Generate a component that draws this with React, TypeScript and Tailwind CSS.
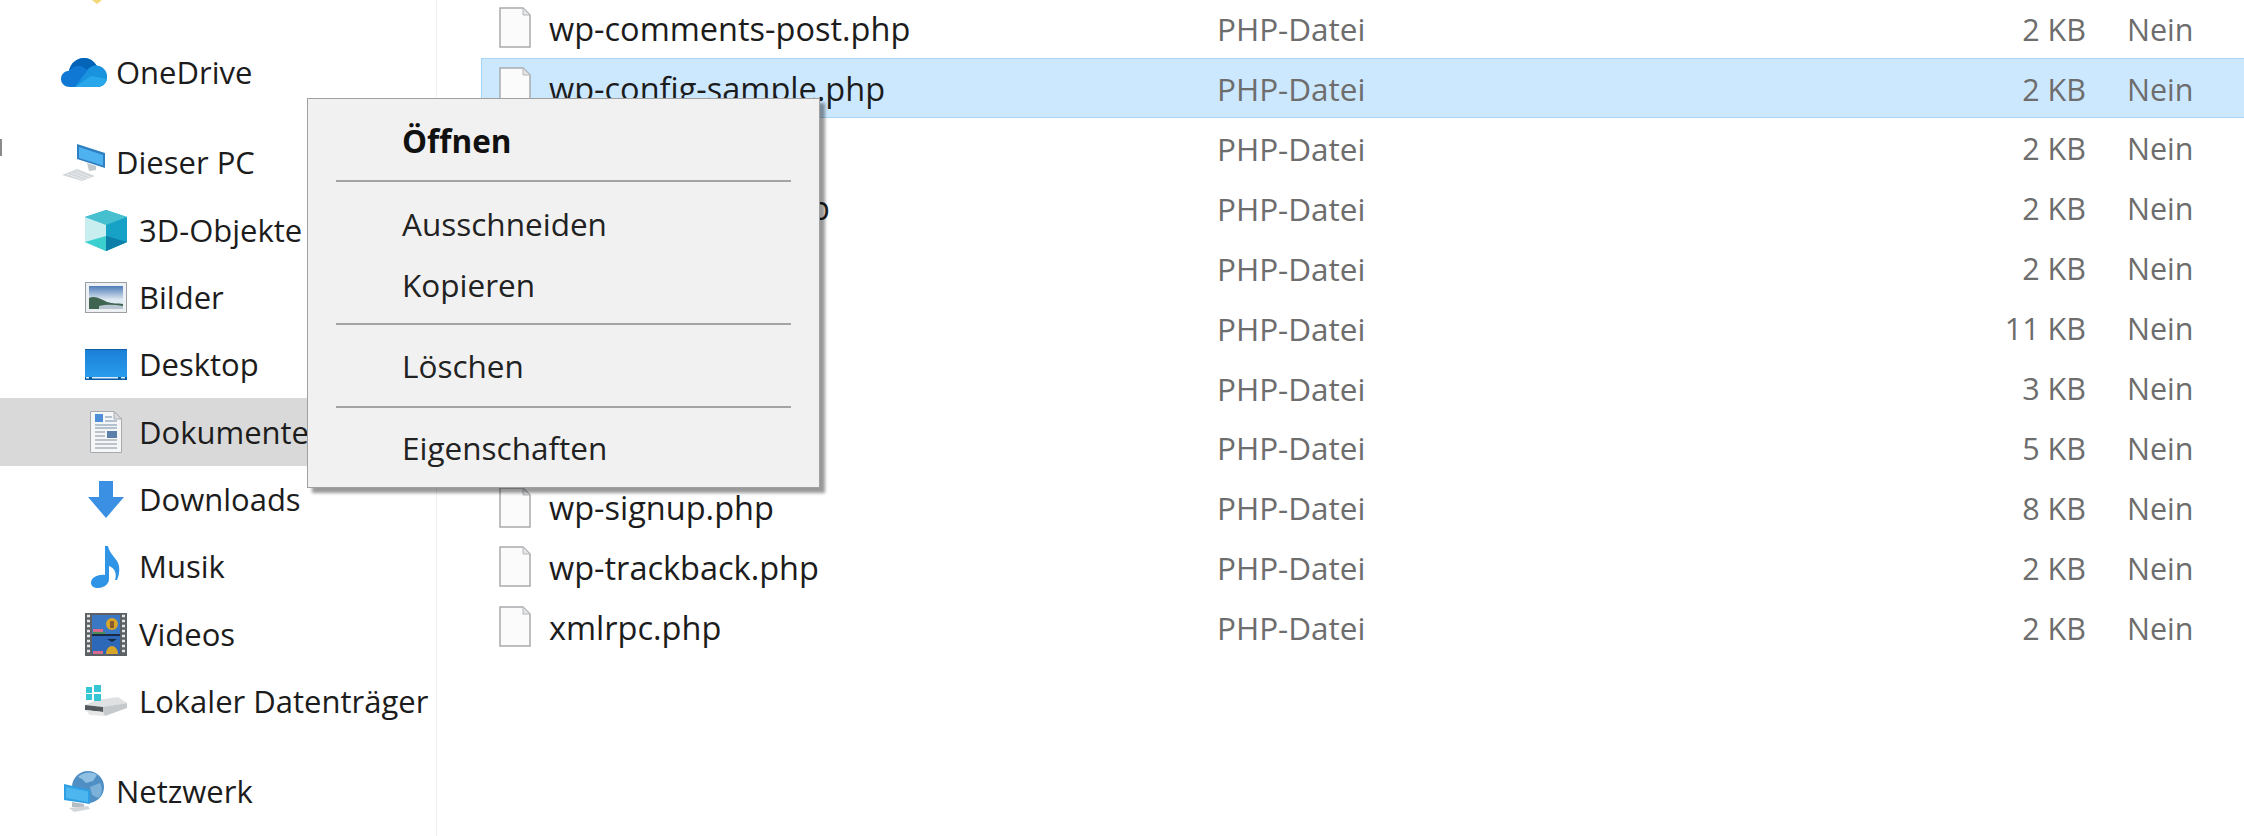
import React from 'react';

const files = [
  { name: 'wp-comments-post.php', size: '2 KB' },
  { name: 'wp-config-sample.php', size: '2 KB', selected: true },
  { name: 'wp-cron.php', size: '2 KB' },
  { name: 'wp-links-opml.php', size: '2 KB' },
  { name: 'wp-load.php', size: '2 KB' },
  { name: 'wp-login.php', size: '11 KB' },
  { name: 'wp-mail.php', size: '3 KB' },
  { name: 'wp-settings.php', size: '5 KB' },
  { name: 'wp-signup.php', size: '8 KB' },
  { name: 'wp-trackback.php', size: '2 KB' },
  { name: 'xmlrpc.php', size: '2 KB' },
];

const OneDriveIcon = () => (
  <svg width="46" height="30" viewBox="0 0 46 30">
    <path d="M9 29C4 29 0 25.500 0 21C0 16.500 3.500 13 8 12.800C9.500 5.500 15.500 0 23 0C28.500 0 33 3 35.500 7.500C41.500 8 46 13 46 19C46 25 41.500 29 36 29Z" fill="#0f78d4" />
    <path d="M8 12.800C9.500 5.500 15.500 0 23 0C28.500 0 33 3 35.500 7.500C31.500 7.500 28.500 9 26.500 12L21 8.500C16 7 11 9 8 12.800Z" fill="#0364b8" />
    <path d="M14 29L26.500 12C28.500 9 31.500 7.500 35.500 7.500C41.500 8 46 13 46 19C46 25 41.500 29 36 29Z" fill="#1a93df" />
    <path d="M14 29L30 18L46 21C45 26 41 29 36 29Z" fill="#28a8ea" />
  </svg>
);

const PcIcon = () => (
  <svg width="44" height="37" viewBox="0 0 44 37">
    <path d="M15 0L43 9V24L15 15Z" fill="#2f80c2" />
    <path d="M17 3L41 11V21.500L17 14Z" fill="#4fb2f0" />
    <path d="M25 19L34 22V26L27 27Z" fill="#c3cacf" />
    <path d="M0 31L15 25L33 32L20 37Z" fill="#d3d7da" />
    <path d="M5 30L22 36M9 28.500L26 35M13 27L29 33.500" stroke="#e9ebed" strokeWidth="1" />
  </svg>
);

const CubeIcon = () => (
  <svg width="42" height="41" viewBox="0 0 42 41">
    <path d="M21 0L42 7V32L21 41L0 32V7Z" fill="#1fb5c9" />
    <path d="M0 7L21 14V41L0 32Z" fill="#c8eef0" />
    <path d="M42 7L21 14V41L42 32Z" fill="#16a2c6" />
    <path d="M21 0L42 7L21 15L0 7Z" fill="#46bfcf" />
    <path d="M0 32L21 26V41Z" fill="#3ccfd0" />
    <path d="M42 32L21 26V41Z" fill="#0c7fa8" />
  </svg>
);

const PicturesIcon = () => (
  <svg width="42" height="31" viewBox="0 0 42 31">
    <defs>
      <linearGradient id="sky" x1="0" y1="0" x2="0" y2="1">
        <stop offset="0" stopColor="#4e7cb8" />
        <stop offset="0.6" stopColor="#dfe9f2" />
      </linearGradient>
    </defs>
    <rect x="0.500" y="0.500" width="41" height="30" fill="#eef1f4" stroke="#9c9fa3" />
    <rect x="4" y="4" width="34" height="23" fill="url(#sky)" />
    <path d="M4 16C10 13 16 17 22 20C28 22 33 21 38 22V27H4Z" fill="#3f6450" />
    <path d="M14 24C22 22 30 23 38 24V27H14Z" fill="#b9c6cf" />
  </svg>
);

const DesktopIcon = () => (
  <svg width="42" height="31" viewBox="0 0 42 31">
    <defs>
      <linearGradient id="screen" x1="0" y1="0" x2="0" y2="1">
        <stop offset="0" stopColor="#1a7fd6" />
        <stop offset="1" stopColor="#2a9ff0" />
      </linearGradient>
    </defs>
    <rect width="42" height="31" fill="url(#screen)" />
    <rect x="0" y="0" width="42" height="1" fill="#0e5fa8" />
    <rect x="0" y="28" width="42" height="3" fill="#0c5ba3" />
    <rect x="7" y="28" width="26" height="1.500" fill="#dbeefc" />
    <rect x="36" y="28" width="4" height="1.500" fill="#dbeefc" />
    <rect x="1" y="28" width="3" height="1.500" fill="#dbeefc" />
  </svg>
);

const DocumentsIcon = () => (
  <svg width="32" height="42" viewBox="0 0 32 42">
    <path d="M0.500 0.500H24L31.500 8V41.500H0.500Z" fill="#f5f6f7" stroke="#a8aaad" />
    <path d="M24 0.500V8H31.500Z" fill="#d9dce0" stroke="#a8aaad" />
    <rect x="5" y="3" width="8" height="8" fill="#4f8fd8" />
    <path d="M15 6H22M15 10H27M5 14H27M5 17H27" stroke="#9fb0c2" strokeWidth="1.500" />
    <path d="M5 21H15M5 25H15M5 29H27M5 33H27M5 37H27" stroke="#aab2bb" strokeWidth="1.500" />
    <rect x="17" y="20" width="10" height="7" fill="#5a7fa8" />
  </svg>
);

const DownloadsIcon = () => (
  <svg width="36" height="37" viewBox="0 0 36 37">
    <path d="M11 0H25V16H36L18 37L0 16H11Z" fill="#3b90e3" />
  </svg>
);

const MusicIcon = () => (
  <svg width="31" height="42" viewBox="0 0 31 42">
    <path d="M14 0H17C18 6 22 9 26 15C29 20 29 27 26 34H24C26 28 24 22 18 20V33C18 38 13 42 7 42C3 42 0 40 0 37C0 32 6 28 14 29Z" fill="#2f93e6" />
  </svg>
);

const VideosIcon = () => (
  <svg width="42" height="43" viewBox="0 0 42 43">
    <rect width="42" height="43" fill="#5d6166" />
    <rect x="7" y="2" width="28" height="19" fill="#3a78c4" />
    <rect x="7" y="23" width="28" height="18" fill="#2d68b8" />
    <rect x="7" y="21" width="28" height="2" fill="#1a2a44" />
    <circle cx="27" cy="11" r="6" fill="#d7a52a" />
    <path d="M25 8H29V15H25Z" fill="#8a5a2a" />
    <path d="M22 26H32L27 29Z" fill="#1a2a44" />
    <path d="M21 41C21 36 24 33 27 33C30 33 33 36 33 41Z" fill="#d7a52a" />
    <path d="M8 16H18V19H8Z" fill="#d86a8a" />
    <path d="M8 19H20V21H8Z" fill="#4d8a5a" />
    <path d="M8 38H18V41H8Z" fill="#d86a8a" />
    <path d="M2 3H5M2 8H5M2 13H5M2 18H5M2 23H5M2 28H5M2 33H5M2 38H5M37 3H40M37 8H40M37 13H40M37 18H40M37 23H40M37 28H40M37 33H40M37 38H40" stroke="#e4e6e8" strokeWidth="2.500" />
  </svg>
);

const DriveIcon = () => (
  <svg width="42" height="32" viewBox="0 0 42 32">
    <path d="M0 20L12 15L33 12L42 18L20 22L18 22Z" fill="#dfe1e3" />
    <path d="M0 20L18 22V27L0 25Z" fill="#55585c" />
    <path d="M0 25L18 27L20 31L5 30Z" fill="#e6e7e8" />
    <path d="M18 22L42 18V23L20 31L18 27Z" fill="#c6c9cc" />
    <rect x="1" y="2" width="6" height="6" fill="#35c6d6" />
    <rect x="9" y="0" width="7" height="7" fill="#35c6d6" />
    <rect x="1" y="9" width="6" height="6" fill="#35c6d6" />
    <rect x="9" y="9" width="7" height="7" fill="#35c6d6" />
  </svg>
);

const NetworkIcon = () => (
  <svg width="40" height="41" viewBox="0 0 40 41">
    <circle cx="24" cy="16" r="16" fill="#4f8fc4" />
    <path d="M14 6C19 1 28 0 33 4L29 10L22 12L18 8Z" fill="#8fbfe2" />
    <path d="M26 16L36 12C39 17 38 24 34 27L28 24Z" fill="#7cb2da" />
    <path d="M0 13L26 19V33L0 29Z" fill="#2f9fe4" />
    <path d="M2 16L24 20.500V31L2 27Z" fill="#4db6ee" />
    <path d="M8 31L20 33V37L8 36Z" fill="#b5bdc4" />
    <path d="M5 37L24 35L26 38L10 41Z" fill="#d2d6da" />
  </svg>
);

const FileIcon = () => (
  <svg width="32" height="41" viewBox="0 0 32 41" className="shrink-0">
    <path d="M1 1H24L31 8V40H1Z" fill="#fbfbfc" stroke="#a9abad" strokeWidth="1.500" />
    <path d="M24 1V8H31Z" fill="#e4e5e7" stroke="#b5b7b9" />
  </svg>
);

const NavRow = ({ icon, label, indent = false, active = false, extra }: { icon: React.ReactNode; label: string; indent?: boolean; active?: boolean; extra?: React.ReactNode }) => (
  <div className={`flex h-[67.3px] items-center ${active ? 'bg-[#d9d9d9]' : ''}`}>
    {extra}
    <div className={`flex items-center justify-center ${indent ? 'ml-[85px] w-[42px]' : 'ml-[61px] w-[46px]'}`}>{icon}</div>
    <span className={`whitespace-nowrap text-[31px] text-[#1c1c1c] ${indent ? 'ml-[12px]' : 'ml-[9px]'}`}>{label}</span>
  </div>
);

const MenuItem = ({ label, bold = false, className = '' }: { label: string; bold?: boolean; className?: string }) => (
  <div className={`flex items-center pl-[94px] text-[31.500px] ${bold ? 'font-bold text-[#111]' : 'text-[#222]'} ${className}`}>{label}</div>
);

const Sep = () => <div className="mx-[28px] h-[2px] bg-[#a4a4a4]" />;

const App: React.FC = () => {
  return (
    <div className="relative flex h-[836px] w-[2244px] overflow-hidden bg-white font-['Open_Sans',sans-serif] leading-none">
      <aside className="w-[437px] shrink-0 border-r border-[#f0f0f0]">
        <div className="mb-[35px] ml-[92px] h-[4px] w-[10px]">
          <svg width="10" height="4" viewBox="0 0 10 4"><path d="M0 0H10L5 4Z" fill="#f3d877" /></svg>
        </div>
        <NavRow icon={<OneDriveIcon />} label="OneDrive" />
        <div className="mt-[23px]">
          <NavRow
            icon={<PcIcon />}
            label="Dieser PC"
            extra={<div className="-mr-[2px] mb-[30px] h-[17px] w-[2px] bg-[#8a8a8a]" />}
          />
          <NavRow indent icon={<CubeIcon />} label="3D-Objekte" />
          <NavRow indent icon={<PicturesIcon />} label="Bilder" />
          <NavRow indent icon={<DesktopIcon />} label="Desktop" />
          <NavRow indent active icon={<DocumentsIcon />} label="Dokumente" />
          <NavRow indent icon={<DownloadsIcon />} label="Downloads" />
          <NavRow indent icon={<MusicIcon />} label="Musik" />
          <NavRow indent icon={<VideosIcon />} label="Videos" />
          <NavRow indent icon={<DriveIcon />} label="Lokaler Datenträger" />
        </div>
        <div className="mt-[23px]">
          <NavRow icon={<NetworkIcon />} label="Netzwerk" />
        </div>
      </aside>

      <main className="-mt-[2px] flex-1 pl-[45px]">
        {files.map((file) => (
          <div
            key={file.name}
            className={`grid h-[59.900px] grid-cols-[32px_669px_778px_108px_auto] items-center pl-[17px] ${
              file.selected ? '-ml-px border border-r-0 border-[#a6d6f7] bg-[#cce8ff]' : ''
            }`}
          >
            <FileIcon />
            <span className="ml-[18px] whitespace-nowrap pt-[2px] text-[32.500px] text-[#1c1c1c]">{file.name}</span>
            <span className="ml-[17px] whitespace-nowrap pt-[2px] text-[31.500px] text-[#6d6d6d]">PHP-Datei</span>
            <span className="whitespace-nowrap pt-[2px] text-right text-[30.500px] text-[#6d6d6d]">{file.size}</span>
            <span className="ml-[41px] whitespace-nowrap pt-[2px] text-[30.500px] text-[#6d6d6d]">Nein</span>
          </div>
        ))}
      </main>

      <div className="absolute left-[307px] top-[98px] flex h-[390px] w-[513px] flex-col border border-[#a0a0a0] bg-[#f1f1f1] shadow-[5px_5px_3px_rgba(0,0,0,0.4)]">
        <MenuItem bold label="Öffnen" className="h-[81px] pt-[3px]" />
        <Sep />
        <MenuItem label="Ausschneiden" className="mt-[11px] h-[61px]" />
        <MenuItem label="Kopieren" className="h-[61px]" />
        <div className="mt-[8px]"><Sep /></div>
        <MenuItem label="Löschen" className="h-[81px]" />
        <Sep />
        <MenuItem label="Eigenschaften" className="h-[79px]" />
      </div>
    </div>
  );
};

export default App;
